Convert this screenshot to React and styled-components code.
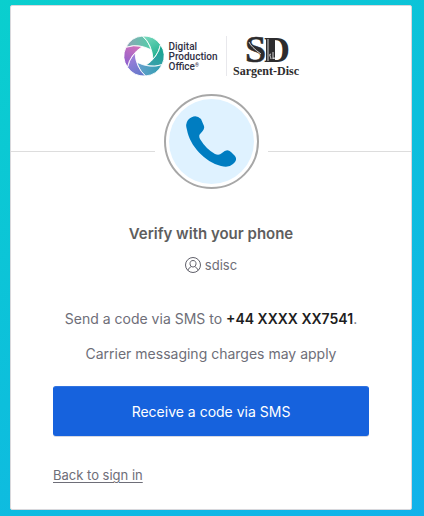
import React from 'react';
import styled, { createGlobalStyle } from 'styled-components';

const GlobalStyle = createGlobalStyle`
    * {
        box-sizing: border-box;
    }

    body {
        margin: 0;
        font-family: Inter, 'Liberation Sans', sans-serif;
        color: #6e6e78;
    }
`;

const Page = styled.div`
    min-height: 100vh;
    padding: 5px 12px 6px 10px;
    background: linear-gradient(145deg, #0acfce 0%, #0dbfdc 50%, #12b2ea 100%);
`;

const Card = styled.main`
    border: 1px solid #d8d8dc;
    border-radius: 2px;
    background: #fff;
`;

const Header = styled.header`
    display: flex;
    justify-content: center;
    align-items: center;
    height: 88px;
    padding-top: 12px;
`;

const ProductionLogo = styled.div`
    display: flex;
    align-items: center;
    gap: 5px;
    padding-right: 8px;
    border-right: 1px solid #e8e8ec;

    & svg {
        width: 40px;
        height: 40px;
    }
`;

const ProductionName = styled.span`
    padding-top: 2px;
    font: 500 10px/10px Roboto, sans-serif;
    color: #303044;

    & small {
        font-size: 5px;
        line-height: 1px;
        vertical-align: 3px;
    }
`;

const SargentLogo = styled.svg`
    width: 66px;
    height: 44px;
    margin-left: 6px;
    overflow: visible;
    color: #2d2c2e;
`;

const BadgeRow = styled.div`
    display: flex;
    align-items: center;
    gap: 9px;

    &::before,
    &::after {
        content: '';
        flex: 1;
        height: 1px;
        margin-top: 20px;
        background: #ddd;
    }
`;

const Badge = styled.div`
    width: 95px;
    height: 95px;
    padding: 3px;
    border: 2px solid #a7a7a7;
    border-radius: 50%;

    & svg {
        display: block;
        width: 100%;
        height: 100%;
        border-radius: 50%;
        background: #dff2ff;
    }
`;

const Content = styled.section`
    display: flex;
    flex-direction: column;
    padding: 34px 42px 25px;
    text-align: center;
`;

const Title = styled.h1`
    margin: 0 0 10px;
    font-size: 15px;
    line-height: 22px;
    font-weight: 600;
    color: #5e5e5e;
`;

const User = styled.div`
    display: flex;
    justify-content: center;
    align-items: center;
    gap: 4px;
    margin-bottom: 33px;
    font-size: 13px;
    line-height: 20px;

    & svg {
        width: 16px;
        height: 16px;
    }
`;

const Message = styled.p`
    margin: 0 0 13px;
    font-size: 14px;
    line-height: 22px;

    & strong {
        font-weight: 600;
        color: #1d1d21;
    }
`;

const SubmitButton = styled.button`
    height: 50px;
    margin: 8px 0 30px;
    padding: 2px 12px 0;
    border: 1px solid #1662dd;
    border-top-color: #3173e0;
    border-radius: 3px;
    box-shadow: 0 1px 0 #d5d8e2;
    background: #1662dd;
    font: 14px/20px Inter, 'Liberation Sans', sans-serif;
    color: #fff;
    cursor: pointer;
`;

const BackLink = styled.a`
    align-self: flex-start;
    font-size: 13px;
    line-height: 18px;
    color: #6e6e78;
    text-underline-offset: 2px;
`;

const blades = [
    { angle: 0, start: '#8fa3b5', end: '#4fd0a8' },
    { angle: 60, start: '#7edcc0', end: '#1fb08f' },
    { angle: 120, start: '#14a68c', end: '#3d9fb0' },
    { angle: 180, start: '#2f9fae', end: '#6a9fd0' },
    { angle: 240, start: '#5b78c8', end: '#a57fdc' },
    { angle: 300, start: '#8a5fd0', end: '#d873b8' },
];

const ApertureIcon = () => (
    <svg viewBox="-20 -20 40 40" aria-hidden="true">
        <defs>
            {blades.map(({ angle, start, end }) => (
                <linearGradient key={angle} id={`blade${angle}`}>
                    <stop offset="0" stopColor={start} />
                    <stop offset="1" stopColor={end} />
                </linearGradient>
            ))}
        </defs>
        {blades.map(({ angle }) => (
            <path
                key={angle}
                transform={`rotate(${angle})`}
                fill={`url(#blade${angle})`}
                stroke="#fff"
                strokeWidth="0.8"
                d="M-18 -8.700A20 20 0 0 1 -1.500 -19.950Q4.500 -15 7.400 -6.200Q-6 -12.800 -18 -8.700Z"
            />
        ))}
    </svg>
);

const PhoneIcon = () => (
    <svg viewBox="0 0 85 85" aria-hidden="true">
        <path
            fill="#007dc1"
            d="M19 21Q26 14 32 20L35 27Q36 30 32 34Q29 36 31 40Q37 50 46 55Q50 57 53 54Q58 49 62 53L66 57Q69 61 64 65Q60 69 52 67C36 63 21 47 18 31Q16 25 19 21Z"
        />
    </svg>
);

const UserIcon = () => (
    <svg viewBox="0 0 16 16" fill="none" stroke="#60606a" aria-hidden="true">
        <circle cx="8" cy="8" r="7.500" />
        <path d="M8 3.500C6 3.500 5 4.800 5 6.700S6.300 10 8 10s3-1.400 3-3.300S10 3.500 8 3.500ZM3 13.500C3.300 11.500 4.600 10.500 6.500 9.500M13 13.500C12.700 11.500 11.400 10.500 9.500 9.500" />
    </svg>
);

const App = () => (
    <>
        <GlobalStyle />
        <Page>
            <Card>
                <Header>
                    <ProductionLogo>
                        <ApertureIcon />
                        <ProductionName>
                            Digital<br />Production<br />Office<small>®</small>
                        </ProductionName>
                    </ProductionLogo>
                    <SargentLogo viewBox="0 0 66 44" fill="currentColor" role="img" aria-label="Sargent-Disc">
                        <g fontFamily="Liberation Serif, serif" fontWeight="700">
                            <text x="12" y="28" fontSize="38" stroke="currentColor" strokeWidth="0.5">S</text>
                            <text x="31" y="28" fontSize="36">D</text>
                            <text x="33" y="41" fontSize="12" textAnchor="middle">Sargent-Disc</text>
                        </g>
                        {/* thick stem and engraved lines of the monogram */}
                        <path d="M33 4H42V28H33Z" />
                        <path d="M35 5V27M16 8Q18 13 28 20" fill="none" stroke="#fff" strokeWidth="0.8" />
                        <path d="M38 20q-2 0-1 2t1 3M40 18v7q1-3 2 0" fill="none" stroke="#fff" strokeWidth="0.8" />
                    </SargentLogo>
                </Header>

                <BadgeRow>
                    <Badge><PhoneIcon /></Badge>
                </BadgeRow>

                <Content>
                    <Title>Verify with your phone</Title>
                    <User><UserIcon /><span>sdisc</span></User>
                    <Message>Send a code via SMS to <strong>+44 XXXX XX7541</strong>.</Message>
                    <Message>Carrier messaging charges may apply</Message>
                    <SubmitButton type="button">Receive a code via SMS</SubmitButton>
                    <BackLink href="#signin">Back to sign in</BackLink>
                </Content>
            </Card>
        </Page>
    </>
);

export default App;
